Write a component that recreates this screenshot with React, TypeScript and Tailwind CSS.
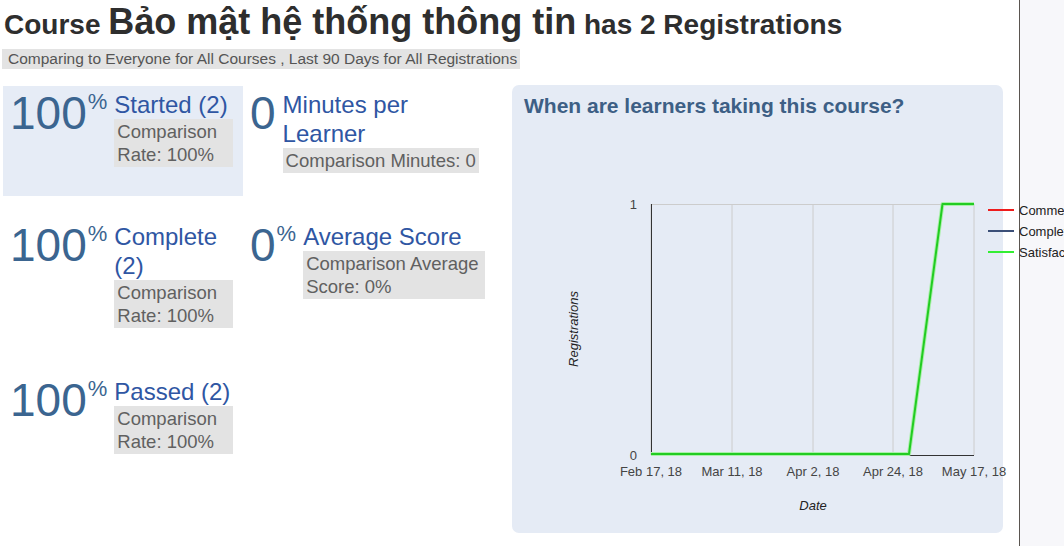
import React from 'react';

type Metric = {
  value: string;
  pct?: boolean;
  label: string;
  compare: string;
  highlight?: boolean;
};

const rows: Metric[][] = [
  [
    { value: '100', pct: true, label: 'Started (2)', compare: 'Comparison Rate: 100%', highlight: true },
    { value: '0', label: 'Minutes per Learner', compare: 'Comparison Minutes: 0' },
  ],
  [
    { value: '100', pct: true, label: 'Complete (2)', compare: 'Comparison Rate: 100%' },
    { value: '0', pct: true, label: 'Average Score', compare: 'Comparison Average Score: 0%' },
  ],
  [{ value: '100', pct: true, label: 'Passed (2)', compare: 'Comparison Rate: 100%' }],
];

function MetricCell({ m, last }: { m: Metric; last?: boolean }) {
  return (
    <div className={`flex items-start gap-[6px] pl-[7px] ${last ? 'pr-[8px]' : 'pr-[10px]'} pt-[4px] pb-[22px] ${m.highlight ? 'bg-[#e6ecf6]' : ''}`}>
      <div className="flex items-start text-[#3b6590]">
        <span className="text-[46px] leading-[46px]">{m.value}</span>
        {m.pct && <span className="text-[22px] leading-[24px] ml-px">%</span>}
      </div>
      <div className="flex-1 min-w-0 pl-px">
        <div className="text-[24px] leading-[29px] text-[#2f56a3]">{m.label}</div>
        <div className="inline-block bg-[#e3e3e3] px-[3px] py-px text-[18.5px] leading-[23px] text-[#606060]">{m.compare}</div>
      </div>
    </div>
  );
}

function Chart() {
  const xs = [139, 220, 301, 381, 462];
  const labels = ['Feb 17, 18', 'Mar 11, 18', 'Apr 2, 18', 'Apr 24, 18', 'May 17, 18'];
  const legend = [
    { c: '#ee1c1c', t: 'Commenced' },
    { c: '#3b4f78', t: 'Completed' },
    { c: '#33ee33', t: 'Satisfactory' },
  ];
  return (
    <svg width="491" height="415" className="block overflow-visible relative z-10" style={{ fontFamily: '"Liberation Sans", Arial, sans-serif' }}>
      {xs.map((x) => (
        <line key={x} x1={x} y1={86} x2={x} y2={337} stroke="#cccccc" strokeWidth="1" />
      ))}
      <line x1={139} y1={86.5} x2={462} y2={86.5} stroke="#cccccc" strokeWidth="1" />
      <line x1={139.5} y1={86} x2={139.5} y2={337} stroke="#333333" strokeWidth="1" />
      <line x1={139} y1={337.5} x2={462} y2={337.5} stroke="#333333" strokeWidth="1" />
      <polyline points="139,336 397,336 430.5,86 462,86" fill="none" stroke="#aaf0aa" strokeWidth="4" strokeLinejoin="round" />
      <polyline points="139,336 397,336 430.5,86 462,86" fill="none" stroke="#22cc22" strokeWidth="2" strokeLinejoin="round" />
      <text x={125} y={91} fontSize="13" fill="#444444" textAnchor="end">1</text>
      <text x={125} y={342} fontSize="13" fill="#444444" textAnchor="end">0</text>
      {xs.map((x, i) => (
        <text key={x} x={x} y={358} fontSize="13" fill="#444444" textAnchor="middle">{labels[i]}</text>
      ))}
      <text x={301} y={392} fontSize="13" fill="#222222" fontStyle="italic" textAnchor="middle">Date</text>
      <text x={0} y={0} fontSize="13" fill="#222222" fontStyle="italic" textAnchor="middle" transform="translate(66 211) rotate(-90)">Registrations</text>
      {legend.map((l, i) => (
        <g key={l.t}>
          <line x1={476} y1={92 + i * 21} x2={502} y2={92 + i * 21} stroke={l.c} strokeWidth="2" />
          <text x={507} y={97 + i * 21} fontSize="13" fill="#222222">{l.t}</text>
        </g>
      ))}
    </svg>
  );
}

export default function App() {
  return (
    <div className="flex h-[546px] w-[1064px] overflow-hidden bg-white font-['Liberation_Sans',Arial,sans-serif]">
      <div className="w-[1020px] shrink-0 border-r border-[#5a5550]">
        <h1 className="pl-[4px] pt-[2px] h-[46px] font-bold text-[#2e2e2e] whitespace-nowrap">
          <span className="text-[28px]">Course </span>
          <span className="text-[36px] leading-[40px]">Bảo mật hệ thống thông tin</span>
          <span className="text-[28px]"> has 2 Registrations</span>
        </h1>
        <div className="ml-[2px] mt-[3px] w-[518px] h-[20px] bg-[#e3e3e3] pl-[6px] text-[15.5px] leading-[20px] text-[#555555] whitespace-nowrap">
          Comparing to Everyone for All Courses , Last 90 Days for All Registrations
        </div>
        <div className="flex mt-[17px]">
          <div className="ml-[3px] w-[490px] flex flex-col gap-[22px]">
            {rows.map((r, i) => (
              <div key={i} className="grid grid-cols-[240px_250px]">
                {r.map((m, j) => (
                  <MetricCell key={m.label} m={m} last={j === 1} />
                ))}
              </div>
            ))}
          </div>
          <div className="ml-[19px] -mt-px w-[491px] h-[448px] rounded-[7px] bg-[#e5ebf5] pt-[9px]">
            <h2 className="pl-[12px] text-[21px] leading-[24px] font-bold text-[#3d5f85]">When are learners taking this course?</h2>
            <Chart />
          </div>
        </div>
      </div>
      <div className="flex-1 bg-[#f7f7fa]" />
    </div>
  );
}
